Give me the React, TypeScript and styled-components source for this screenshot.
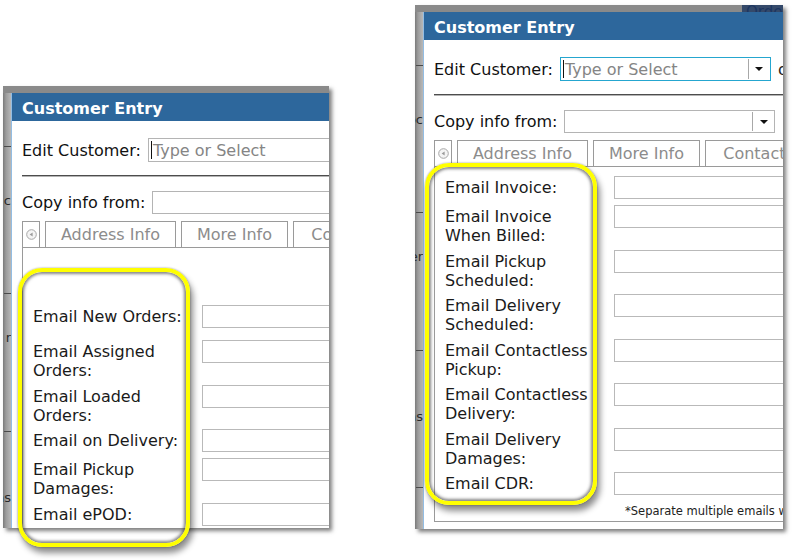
import React from "react";
import styled, { createGlobalStyle } from "styled-components";

const GlobalStyle = createGlobalStyle`
  html, body {
    margin: 0;
    padding: 0;
    background: #fff;
  }
  body {
    font-family: "DejaVu Sans", Verdana, sans-serif;
  }
`;

const Page = styled.div`
  width: 793px;
  height: 560px;
  overflow: hidden;
  display: flex;
  align-items: flex-start;
  padding-left: 3px;
  box-sizing: border-box;
`;

const ShotWrap = styled.div<{ $top: number; $left: number; $w: number; $h: number }>`
  position: relative;
  flex: none;
  margin-top: ${(p) => p.$top}px;
  margin-left: ${(p) => p.$left}px;
  width: ${(p) => p.$w}px;
  height: ${(p) => p.$h}px;
`;

const Shot = styled.div`
  width: 100%;
  height: 100%;
  overflow: hidden;
  display: grid;
  grid-template-columns: 8px 1fr;
  grid-template-rows: 7px 1fr;
  background: #8a8a8a;
  box-shadow: 3px 3px 4px rgba(0, 0, 0, 0.5);
`;

const TopBand = styled.div`
  grid-column: 1 / span 2;
  background: #8a8a8a;
  overflow: hidden;
  display: flex;
  padding-left: 327px;
`;

const BandText = styled.span`
  background: #34496a;
  color: #1c3560;
  font-size: 15px;
  line-height: 15px;
  padding: 0 4px;
  white-space: nowrap;
`;

const Strip = styled.div`
  background: linear-gradient(to right, #7a7a7a 0, #9c9c9c 3px, #b8b8b8 8px);
  overflow: hidden;
  display: flex;
  flex-direction: column;
`;

const StripDash = styled.div<{ $gap: number }>`
  margin-top: ${(p) => p.$gap}px;
  margin-left: 1px;
  height: 1px;
  width: 7px;
  background: #4a4a4a;
  flex: none;
`;

const StripText = styled.div<{ $gap: number }>`
  margin-top: ${(p) => p.$gap}px;
  height: 14px;
  line-height: 14px;
  font-size: 13px;
  color: #2a2a2a;
  display: flex;
  justify-content: flex-end;
  white-space: nowrap;
  flex: none;
`;

const Dialog = styled.div`
  background: #fff;
  border-left: 1px solid #93bde3;
  width: 540px;
`;

const TitleBar = styled.div`
  height: 28px;
  box-sizing: border-box;
  background: #2d679c;
  color: #fff;
  font-weight: bold;
  font-size: 16px;
  line-height: 24px;
  padding: 4px 0 0 10px;
`;

const Body = styled.div`
  padding-left: 10px;
`;

const FieldLine = styled.div<{ $gap: number }>`
  display: flex;
  align-items: center;
  margin-top: ${(p) => p.$gap}px;
  font-size: 16px;
  color: #111;
`;

const Combo = styled.div<{ $focused?: boolean; $h: number }>`
  width: 211px;
  height: ${(p) => p.$h}px;
  box-sizing: border-box;
  margin-left: 7px;
  border: 1px solid ${(p) => (p.$focused ? "#25a6cf" : "#b4b4b4")};
  display: flex;
  align-items: center;
  background: #fff;
`;

const ComboText = styled.div`
  flex: 1;
  display: flex;
  align-items: center;
  color: #858585;
  font-size: 16px;
  padding-left: 2px;
`;

const Caret = styled.span`
  width: 1px;
  height: 18px;
  background: #111;
  margin-right: 1px;
`;

const DropBtn = styled.div`
  width: 21px;
  align-self: stretch;
  border-left: 1px solid #a8a8a8;
  margin: 1px 0;
  display: flex;
  align-items: center;
  justify-content: center;
  &::after {
    content: "";
    border-left: 4px solid transparent;
    border-right: 4px solid transparent;
    border-top: 4px solid #111;
  }
`;

const After = styled.span`
  margin-left: 7px;
  color: #222;
`;

const Divider = styled.div`
  margin-top: 13px;
  border-top: 1px solid #4d4d4d;
  border-bottom: 1px solid #b4b4b4;
`;

const TabRow = styled.div`
  display: flex;
  gap: 5px;
  margin-top: 7px;
  height: 26px;
`;

const TabNav = styled.div`
  width: 18px;
  box-sizing: border-box;
  border: 1px solid #9a9a9a;
  border-bottom: none;
  display: flex;
  align-items: center;
  justify-content: center;
`;

const Tab = styled.div<{ $w: number }>`
  width: ${(p) => p.$w}px;
  flex: none;
  box-sizing: border-box;
  border: 1px solid #9a9a9a;
  border-bottom: none;
  color: #8c8c8c;
  font-size: 16px;
  display: flex;
  align-items: center;
  justify-content: center;
  white-space: nowrap;
`;

const TabPanel = styled.div<{ $pad: number }>`
  border: 1px solid #9a9a9a;
  padding-top: ${(p) => p.$pad}px;
`;

const Row = styled.div<{ $extra: number }>`
  display: grid;
  grid-template-columns: 179px 260px;
  align-items: start;
  padding: 3px 0;
  margin-top: ${(p) => p.$extra}px;
`;

const Label = styled.div`
  padding: 2px 0 0 10px;
  margin-bottom: -1.5px;
  line-height: 19px;
  font-size: 16px;
  color: #1a1a1a;
  white-space: nowrap;
`;

const TextBox = styled.div`
  height: 23px;
  box-sizing: border-box;
  border: 1px solid #b9b9b9;
  background: #fff;
`;

const Note = styled.div`
  margin-top: 6px;
  padding: 0 0 3px 190px;
  line-height: 14px;
  font-size: 11.5px;
  color: #222;
  white-space: nowrap;
`;

const Highlight = styled.div<{ $x: number; $y: number; $w: number; $h: number }>`
  position: absolute;
  left: ${(p) => p.$x}px;
  top: ${(p) => p.$y}px;
  width: ${(p) => p.$w}px;
  height: ${(p) => p.$h}px;
  box-sizing: border-box;
  border: 4px solid #ffff00;
  border-radius: 24px;
  box-shadow: inset 0 0 3px 2px rgba(70, 70, 70, 0.65),
    0 0 2px rgba(0, 0, 0, 0.45), 3px 6px 6px rgba(0, 0, 0, 0.45);
  pointer-events: none;
`;

type Field = { lines: string[]; extra?: number };

const leftFields: Field[] = [
  { lines: ["Email New Orders:"] },
  { lines: ["Email Assigned", "Orders:"], extra: 6 },
  { lines: ["Email Loaded", "Orders:"] },
  { lines: ["Email on Delivery:"] },
  { lines: ["Email Pickup", "Damages:"] },
  { lines: ["Email ePOD:"] },
];

const rightFields: Field[] = [
  { lines: ["Email Invoice:"] },
  { lines: ["Email Invoice", "When Billed:"] },
  { lines: ["Email Pickup", "Scheduled:"] },
  { lines: ["Email Delivery", "Scheduled:"] },
  { lines: ["Email Contactless", "Pickup:"] },
  { lines: ["Email Contactless", "Delivery:"] },
  { lines: ["Email Delivery", "Damages:"] },
  { lines: ["Email CDR:"] },
];

function NavIcon() {
  return (
    <svg width="11" height="11" viewBox="0 0 11 11">
      <circle cx="5.5" cy="5.5" r="4.8" fill="#f4f4f4" stroke="#a6a6a6" strokeWidth="1" />
      <path d="M3.6 5.5 L6.6 3.5 L6.6 7.5 Z" fill="#9a9a9a" />
    </svg>
  );
}

function PageStrip({ words }: { words: string[] }) {
  return (
    <Strip>
      <StripDash $gap={53} />
      <StripText $gap={47}>{words[0]}</StripText>
      <StripDash $gap={85} />
      <StripText $gap={37}>{words[1]}</StripText>
      <StripDash $gap={86} />
      <StripText $gap={59}>{words[2]}</StripText>
      <StripDash $gap={63} />
    </Strip>
  );
}

function CustomerDialog({
  fields,
  focused,
  topPad,
  note,
}: {
  fields: Field[];
  focused?: boolean;
  topPad: number;
  note?: boolean;
}) {
  return (
    <Dialog>
      <TitleBar>Customer Entry</TitleBar>
      <Body>
        <FieldLine $gap={17}>
          Edit Customer:
          <Combo $focused={focused} $h={24}>
            <ComboText>
              <Caret />
              Type or Select
            </ComboText>
            <DropBtn />
          </Combo>
          <After>or</After>
        </FieldLine>
        <Divider />
        <FieldLine $gap={14}>
          Copy info from:
          <Combo $h={23}>
            <ComboText />
            <DropBtn />
          </Combo>
        </FieldLine>
        <TabRow>
          <TabNav>
            <NavIcon />
          </TabNav>
          <Tab $w={131}>Address Info</Tab>
          <Tab $w={107}>More Info</Tab>
          <Tab $w={107}>Contacts</Tab>
        </TabRow>
        <TabPanel $pad={topPad}>
          {fields.map((f, i) => (
            <Row key={i} $extra={f.extra ?? 0}>
              <Label>
                {f.lines.map((l, j) => (
                  <div key={j}>{l}</div>
                ))}
              </Label>
              <TextBox />
            </Row>
          ))}
          {note && <Note>*Separate multiple emails with a semicolon</Note>}
        </TabPanel>
      </Body>
    </Dialog>
  );
}

export default function App() {
  return (
    <Page>
      <GlobalStyle />
      <ShotWrap $top={86} $left={0} $w={326} $h={442}>
        <Shot>
          <TopBand />
          <PageStrip words={["c", "r", "ns"]} />
          <CustomerDialog fields={leftFields} topPad={54} />
        </Shot>
        <Highlight $x={15} $y={182} $w={172} $h={279} />
      </ShotWrap>
      <ShotWrap $top={5} $left={86} $w={368} $h={524}>
        <Shot>
          <TopBand>
            <BandText>Orders</BandText>
          </TopBand>
          <PageStrip words={["oc", "er", "ns"]} />
          <CustomerDialog fields={rightFields} focused topPad={6} note />
        </Shot>
        <Highlight $x={10} $y={158} $w={172} $h={342} />
      </ShotWrap>
    </Page>
  );
}
